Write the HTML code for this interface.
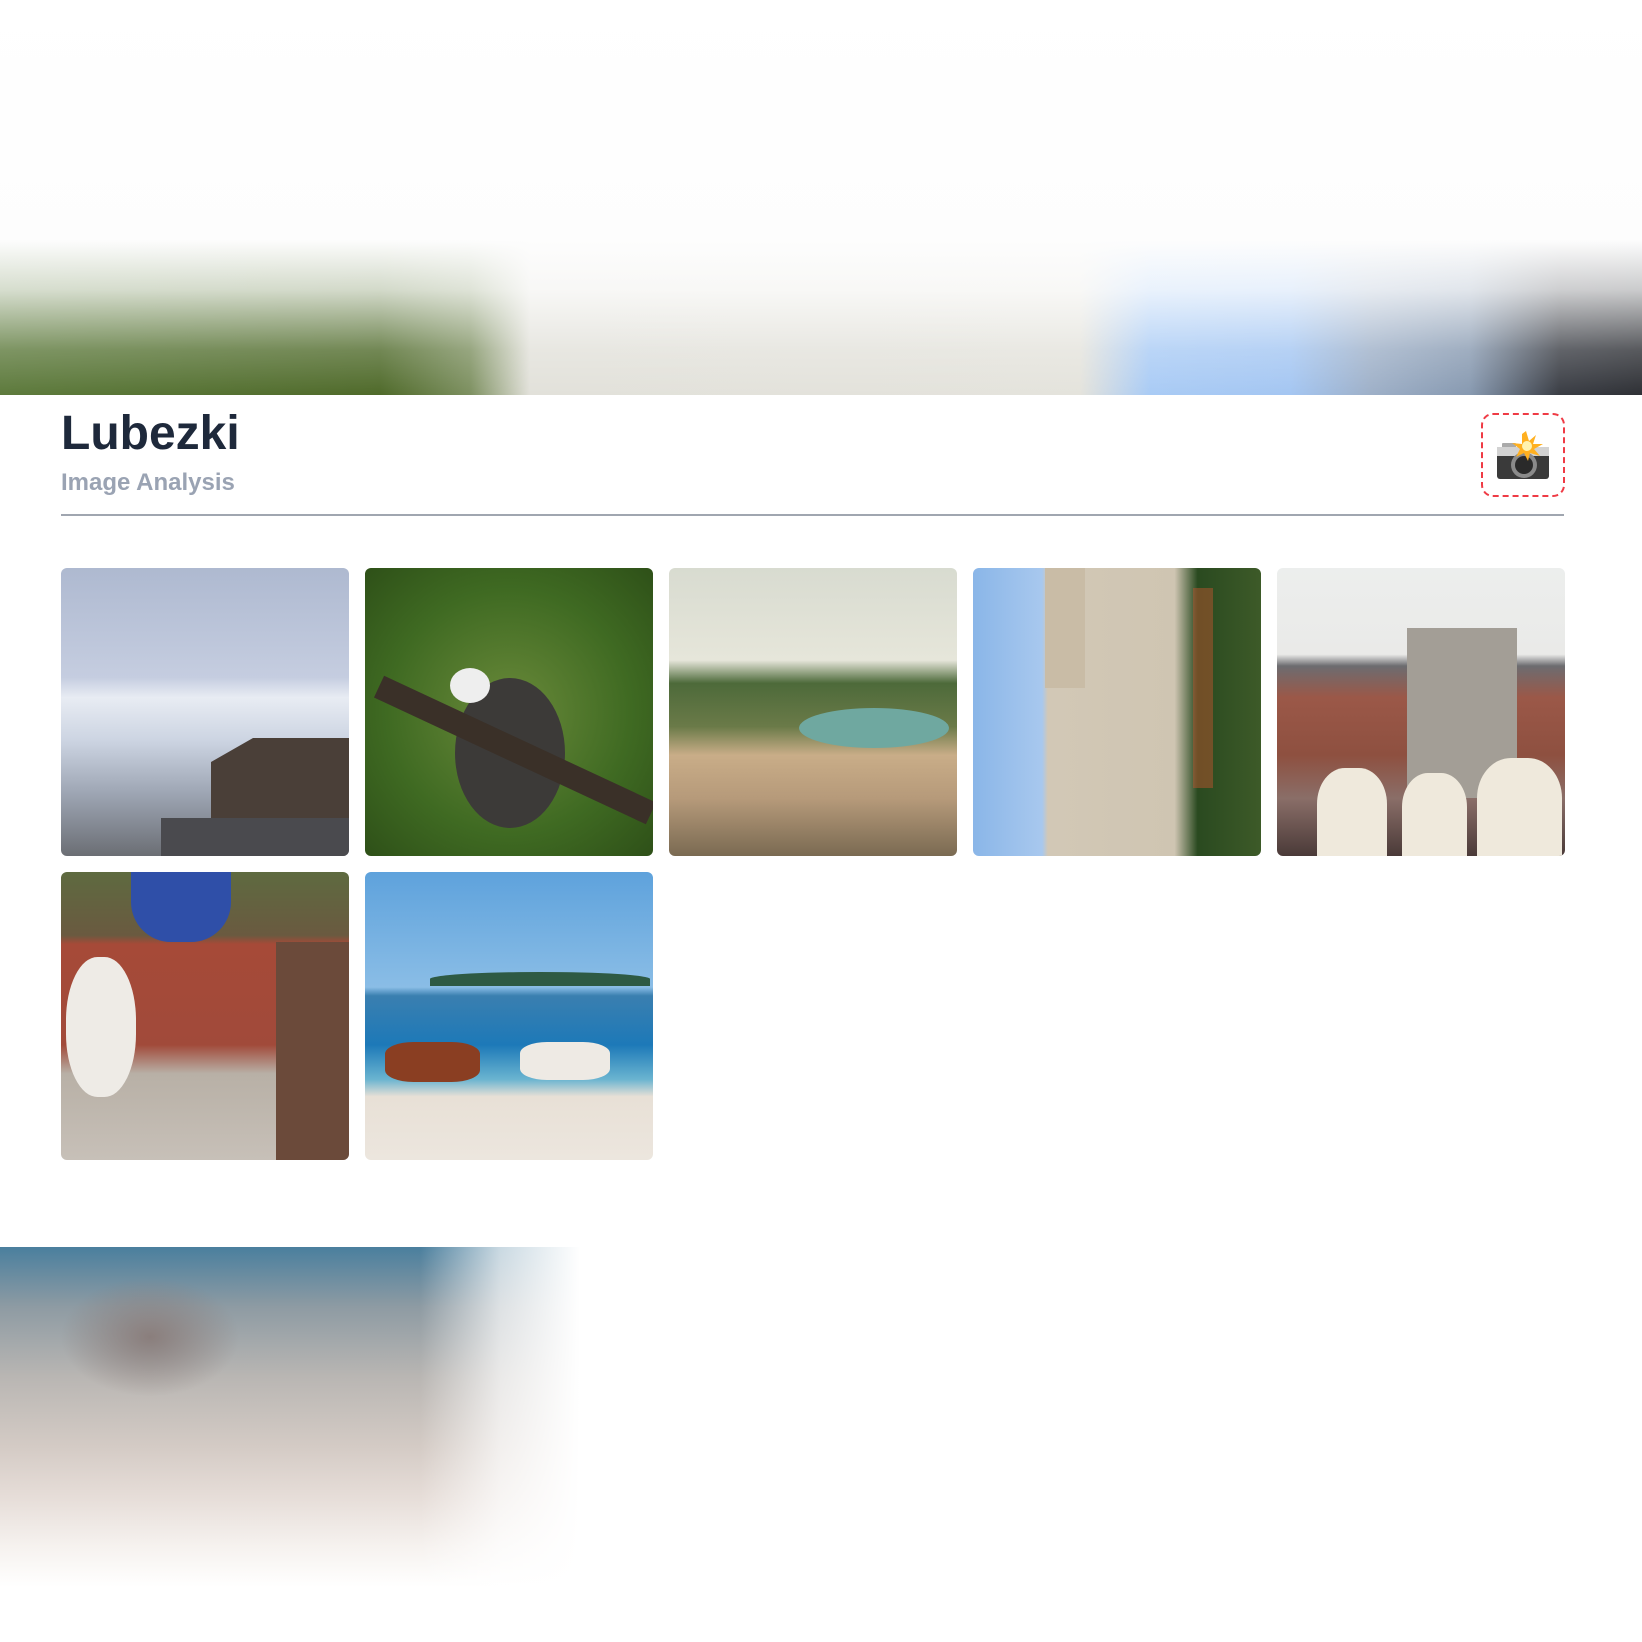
<!DOCTYPE html>
<html><head><meta charset="utf-8"><style>
html,body{margin:0;padding:0;background:#fff;width:1642px;height:1642px;overflow:hidden;position:relative;font-family:"Liberation Sans",sans-serif}
.banner{position:absolute;left:0;top:0;width:1642px;height:395px;background:linear-gradient(90deg,#5d7a3c 0,#4f6a2a 380px,#7d9060 470px,#e2e1da 530px,#e4e3dc 1080px,#a9cbf5 1150px,#a4c6f2 1290px,#9eb0c8 1370px,#8799b0 1470px,#3a3d44 1560px,#2e3035 1642px)}
.banner:after{content:"";position:absolute;inset:0;background:linear-gradient(180deg,#fff 0,#fdfdfd 240px,rgba(255,255,255,.75) 290px,rgba(255,255,255,.2) 350px,rgba(255,255,255,0) 395px)}
.bottom{position:absolute;left:0;top:1247px;width:600px;height:340px;background:linear-gradient(180deg,#4a7f9e 0,#8e9ba3 60px,#b9b6b3 130px,#d4cbc5 200px,#e6ddd8 250px,#f6f2ef 300px,#fff 340px)}
.bottom:before{content:"";position:absolute;left:60px;top:30px;width:180px;height:120px;border-radius:50%;background:radial-gradient(#8a7e7c,rgba(138,126,124,0) 70%)}
.bottom:after{content:"";position:absolute;inset:0;background:linear-gradient(90deg,rgba(255,255,255,0) 0,rgba(255,255,255,0) 420px,rgba(255,255,255,.7) 500px,#fff 580px)}
h1{position:absolute;left:61px;top:406px;margin:0;font-size:48px;font-weight:bold;color:#1e293b;line-height:56px}
.sub{position:absolute;left:61px;top:469px;font-size:24px;font-weight:bold;color:#9aa3b3;line-height:28px}
.line{position:absolute;left:61px;top:514px;width:1503px;height:2px;background:#a0a6b0}
.cam{position:absolute;left:1481px;top:413px;width:80px;height:80px;border:2px dashed #ef3b45;border-radius:12px}
.t{position:absolute;width:288px;height:288px;border-radius:6px;overflow:hidden}
</style></head><body>
<div class="banner"></div>
<h1>Lubezki</h1>
<div class="sub">Image Analysis</div>
<div class="line"></div>
<div class="cam"><svg width="80" height="80" viewBox="0 0 80 80">
<rect x="19" y="28" width="14" height="6" rx="1" fill="#aaa"/>
<rect x="14" y="32" width="52" height="32" rx="3" fill="#3a3a3a"/>
<rect x="14" y="32" width="52" height="9" fill="#d2d2d2"/>
<circle cx="41" cy="50" r="13" fill="#8a8a8a"/><circle cx="41" cy="50" r="9" fill="#2a2a2a"/>
<polygon points="43,16 46,26 53,20 50,29 60,29 51,34 57,41 47,38 45,46 41,38 33,42 37,34 29,28 39,29 39,19" fill="#ffb020"/>
<circle cx="44" cy="31" r="5" fill="#fff3b0"/>
</svg></div>
<div class="t" style="left:61px;top:568px;background:linear-gradient(180deg,#aeb9d0 0,#c5cde0 38%,#e8ecf3 45%,#ccd4e2 60%,#9ea6b4 78%,#6b6e74 100%)"><div style="position:absolute;left:150px;top:170px;width:140px;height:80px;background:#4a3f38;clip-path:polygon(30% 0,100% 0,100% 100%,0 100%,0 30%)"></div><div style="position:absolute;left:100px;top:250px;width:190px;height:40px;background:#4a4a4e"></div></div>
<div class="t" style="left:365px;top:568px;background:radial-gradient(circle at 50% 50%,#6a8a3a,#3f6a22 60%,#2e5018);"><div style="position:absolute;left:90px;top:110px;width:110px;height:150px;border-radius:50%;background:#3c3a38"></div><div style="position:absolute;left:85px;top:100px;width:40px;height:35px;border-radius:50%;background:#eee"></div><div style="position:absolute;left:0;top:170px;width:300px;height:24px;background:#3a3028;transform:rotate(25deg)"></div></div>
<div class="t" style="left:669px;top:568px;background:linear-gradient(180deg,#d8dbd0 0,#e6e6da 32%,#4d6a3a 40%,#6a7a48 55%,#c9ad88 65%,#b69a7a 80%,#7a6a52 100%)"><div style="position:absolute;left:130px;top:140px;width:150px;height:40px;background:#6fa8a0;border-radius:50%"></div></div>
<div class="t" style="left:973px;top:568px;background:linear-gradient(90deg,#8ab6e8 0,#a8c8ee 24%,#d2c8b6 26%,#cfc5b2 70%,#2a4a20 78%,#3d5a28 100%)"><div style="position:absolute;left:72px;top:0;width:40px;height:120px;background:#c9bca6"></div><div style="position:absolute;left:220px;top:20px;width:20px;height:200px;background:#b8532e;opacity:.5"></div></div>
<div class="t" style="left:1277px;top:568px;background:linear-gradient(180deg,#eceeed 0,#eaeae8 30%,#6c6c70 34%,#9b5848 45%,#8e5040 65%,#8a6e68 80%,#4a3a38 100%)"><div style="position:absolute;left:130px;top:60px;width:110px;height:170px;background:#a39e96"></div><div style="position:absolute;left:40px;top:200px;width:70px;height:90px;border-radius:40% 40% 0 0;background:#efe9dc"></div><div style="position:absolute;left:125px;top:205px;width:65px;height:85px;border-radius:40% 40% 0 0;background:#efe9dc"></div><div style="position:absolute;left:200px;top:190px;width:85px;height:100px;border-radius:40% 40% 0 0;background:#efe9dc"></div></div>
<div class="t" style="left:61px;top:872px;background:linear-gradient(180deg,#5e6a40 0,#6a5a40 22%,#a64a38 25%,#a14a3a 60%,#b8b0a6 70%,#c7c0b8 100%)"><div style="position:absolute;left:70px;top:0;width:100px;height:70px;border-radius:0 0 40px 40px;background:#2f4fa8"></div><div style="position:absolute;left:5px;top:85px;width:70px;height:140px;border-radius:45%;background:#eeebe6"></div><div style="position:absolute;left:215px;top:70px;width:73px;height:218px;background:#6b4a3a"></div></div>
<div class="t" style="left:365px;top:872px;background:linear-gradient(180deg,#5ea2dc 0,#8abde6 40%,#3a7fb0 43%,#1d79b8 60%,#6ab4d0 72%,#e8e0d6 78%,#ece6de 100%)"><div style="position:absolute;left:65px;top:100px;width:220px;height:14px;background:#2e5a44;border-radius:50% 50% 0 0"></div><div style="position:absolute;left:20px;top:170px;width:95px;height:40px;background:#8a3e22;border-radius:30%"></div><div style="position:absolute;left:155px;top:170px;width:90px;height:38px;background:#eeeae4;border-radius:30%"></div></div>
<div class="bottom"></div>
</body></html>
